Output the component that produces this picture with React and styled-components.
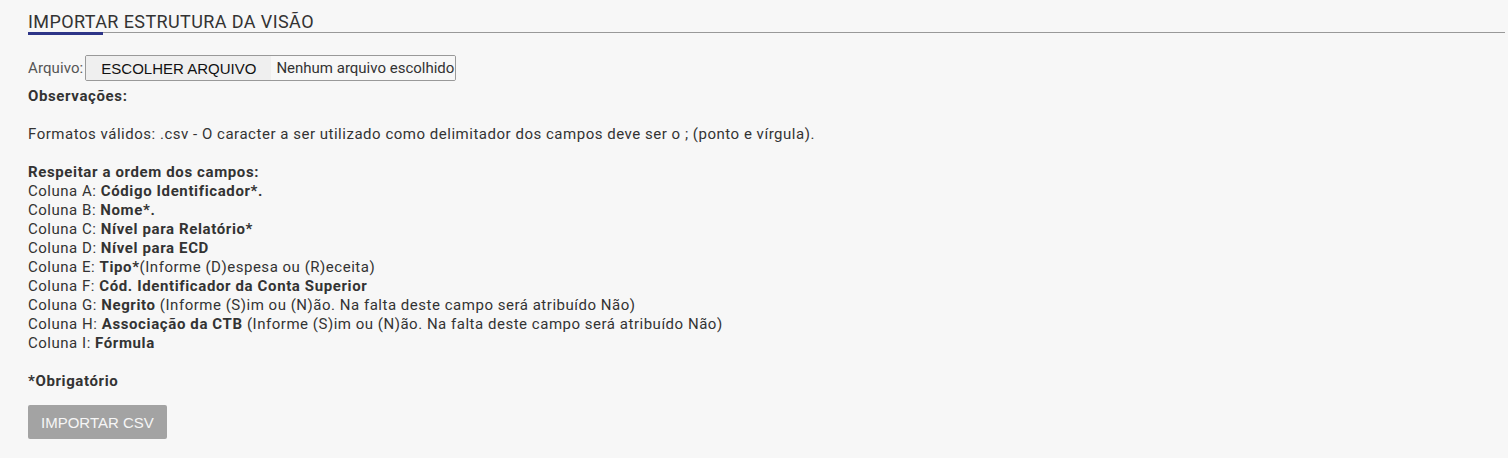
import styled, { createGlobalStyle } from "styled-components";

const GlobalStyle = createGlobalStyle`
  html, body {
    margin: 0;
    padding: 0;
    background: #f7f7f7;
  }
  body {
    font-family: Roboto, "Liberation Sans", Arial, sans-serif;
    color: #333;
  }
`;

const Page = styled.div`
  padding: 11px 3px 18px 28px;
  min-height: 458px;
  box-sizing: border-box;
`;

const TitleBar = styled.div`
  position: relative;
  border-bottom: 1px solid #999;
`;

const Title = styled.h2`
  margin: 0;
  font-size: 18px;
  font-weight: 400;
  letter-spacing: 0.4px;
  line-height: 21px;
  color: #333;
  text-transform: uppercase;

  &::after {
    content: "";
    position: absolute;
    left: 0;
    bottom: -3px;
    width: 75px;
    height: 3px;
    background: #2e3588;
  }
`;

const FileRow = styled.div`
  display: flex;
  align-items: center;
  gap: 2px;
  margin-top: 22px;
  font-size: 15px;
  letter-spacing: 0.1px;
  color: #555;
`;

const FileBox = styled.label`
  display: inline-flex;
  align-items: stretch;
  height: 26px;
  box-sizing: border-box;
  border: 1px solid #999;
  border-radius: 2px;
  overflow: hidden;
  cursor: pointer;
`;

const FileButton = styled.span`
  display: flex;
  align-items: center;
  padding: 0 15px;
  background: #efefef;
  font-family: "Liberation Sans", Arial, sans-serif;
  font-size: 15px;
  letter-spacing: 0;
  color: #111;
`;

const FileName = styled.span`
  display: flex;
  align-items: center;
  padding: 0 1px 0 5px;
  background: #f7f7f7;
  font-size: 15px;
  letter-spacing: 0;
  color: #333;
`;

const Notes = styled.div`
  margin-top: 6px;
  font-size: 15px;
  letter-spacing: 0.52px;
  line-height: 19px;
  color: #333;
`;

const Strong = styled.b`
  font-weight: 700;
  letter-spacing: 0.62px;
  color: #333;
`;

const Line = styled.div`
  min-height: 19px;
  white-space: nowrap;
`;

const Gap = styled.div`
  height: 19px;
`;

const ImportButton = styled.button`
  margin-top: 14px;
  height: 34px;
  padding: 0 13px;
  border: none;
  border-radius: 2px;
  background: #a3a3a3;
  color: #f6f6f6;
  font-family: "Liberation Sans", Arial, sans-serif;
  font-size: 15px;
  cursor: default;
`;

const columns = [
  ["A", "Código Identificador*.", ""],
  ["B", "Nome*.", ""],
  ["C", "Nível para Relatório*", ""],
  ["D", "Nível para ECD", ""],
  ["E", "Tipo*", "(Informe (D)espesa ou (R)eceita)"],
  ["F", "Cód. Identificador da Conta Superior", ""],
  ["G", "Negrito", " (Informe (S)im ou (N)ão. Na falta deste campo será atribuído Não)"],
  ["H", "Associação da CTB", " (Informe (S)im ou (N)ão. Na falta deste campo será atribuído Não)"],
  ["I", "Fórmula", ""],
];

export default function App() {
  return (
    <>
      <GlobalStyle />
      <Page>
        <TitleBar>
          <Title>Importar Estrutura da Visão</Title>
        </TitleBar>

        <FileRow>
          <span>Arquivo:</span>
          <FileBox>
            <FileButton>ESCOLHER ARQUIVO</FileButton>
            <FileName>Nenhum arquivo escolhido</FileName>
          </FileBox>
        </FileRow>

        <Notes>
          <Line>
            <Strong>Observações:</Strong>
          </Line>
          <Gap />
          <Line>
            Formatos válidos: .csv - O caracter a ser utilizado como delimitador
            dos campos deve ser o ; (ponto e vírgula).
          </Line>
          <Gap />
          <Line>
            <Strong>Respeitar a ordem dos campos:</Strong>
          </Line>
          {columns.map(([col, name, note]) => (
            <Line key={col}>
              Coluna {col}: <Strong>{name}</Strong>
              {note}
            </Line>
          ))}
          <Gap />
          <Line>
            <Strong>*Obrigatório</Strong>
          </Line>
        </Notes>

        <ImportButton disabled>IMPORTAR CSV</ImportButton>
      </Page>
    </>
  );
}
